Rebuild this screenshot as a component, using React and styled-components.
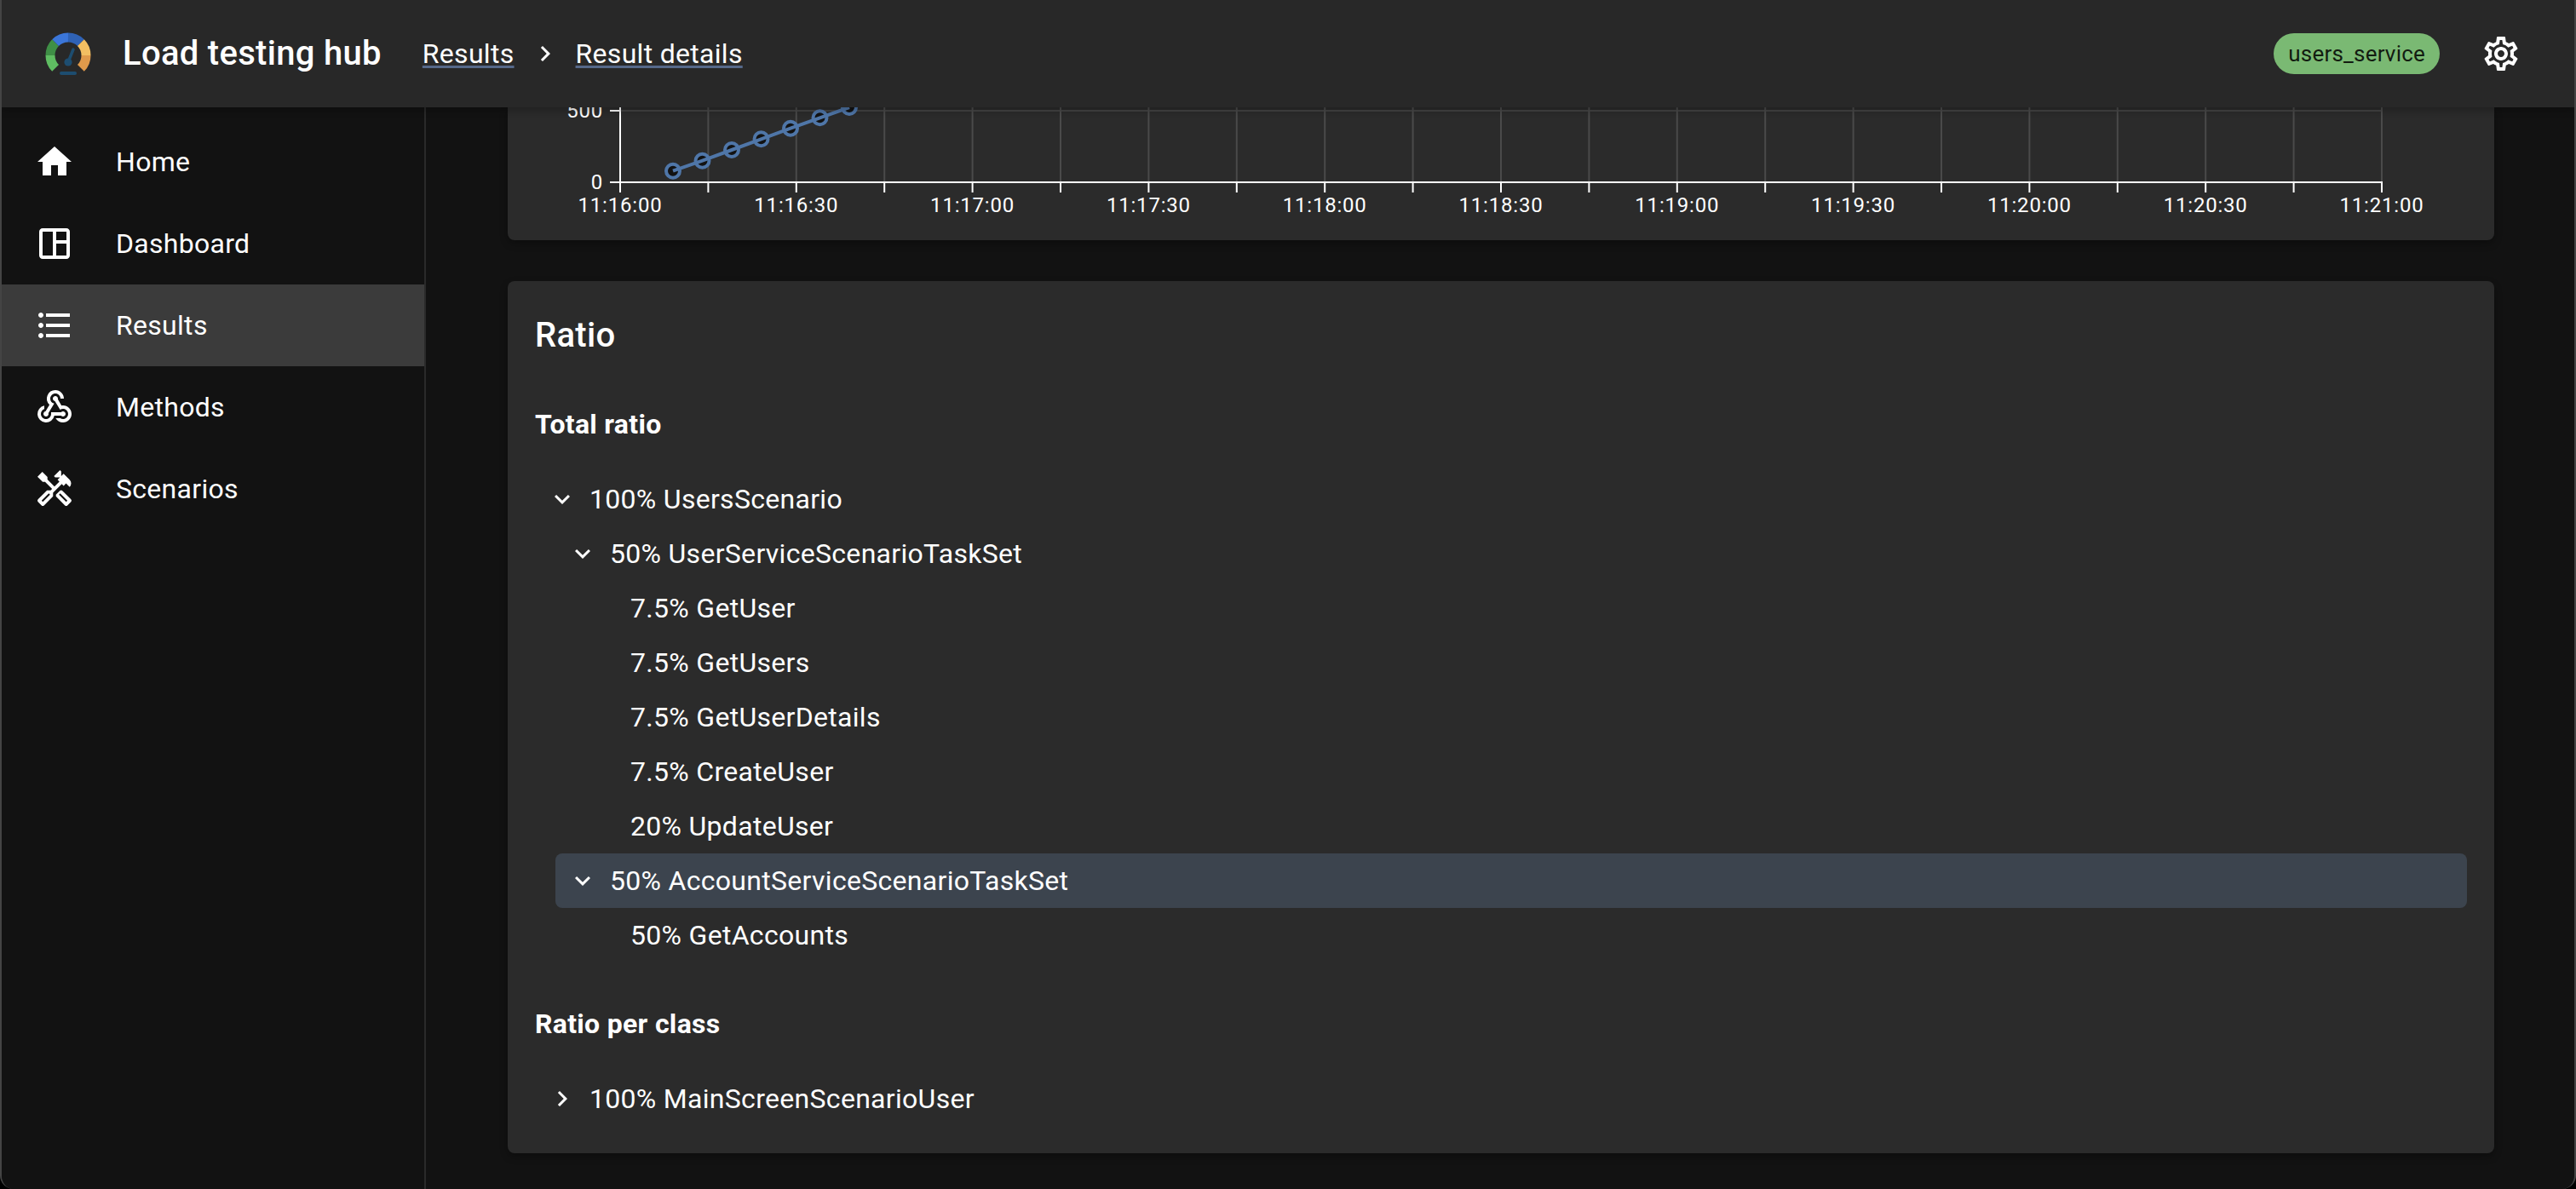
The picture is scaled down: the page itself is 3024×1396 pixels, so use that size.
import React from "react";
import styled, { createGlobalStyle } from "styled-components";
import {
  MdHome,
  MdFormatListBulleted,
  MdOutlineWebhook,
  MdOutlineHandyman,
  MdOutlineSettings,
  MdExpandMore,
  MdChevronRight,
  MdNavigateNext,
} from "react-icons/md";

const GlobalStyle = createGlobalStyle`
  html, body {
    margin: 0;
    padding: 0;
    background: #000;
  }
  * {
    box-sizing: border-box;
  }
`;

const DashboardIcon = ({ size }) => (
  <svg width={size} height={size} viewBox="0 0 24 24" fill="currentColor">
    <path
      fillRule="evenodd"
      d="M19 3H5c-1.1 0-2 .9-2 2v14c0 1.1.9 2 2 2h14c1.1 0 2-.9 2-2V5c0-1.1-.9-2-2-2zM5 19V5h6v14H5zm8 0v-7h6v7h-6zm6-9h-6V5h6v5z"
    />
  </svg>
);

const menu = [
  { label: "Home", Icon: MdHome },
  { label: "Dashboard", Icon: DashboardIcon },
  { label: "Results", Icon: MdFormatListBulleted, active: true },
  { label: "Methods", Icon: MdOutlineWebhook },
  { label: "Scenarios", Icon: MdOutlineHandyman },
];

const totalRatio = [
  { label: "100% UsersScenario", depth: 0, open: true },
  { label: "50% UserServiceScenarioTaskSet", depth: 1, open: true },
  { label: "7.5% GetUser", depth: 2 },
  { label: "7.5% GetUsers", depth: 2 },
  { label: "7.5% GetUserDetails", depth: 2 },
  { label: "7.5% CreateUser", depth: 2 },
  { label: "20% UpdateUser", depth: 2 },
  { label: "50% AccountServiceScenarioTaskSet", depth: 1, open: true, selected: true },
  { label: "50% GetAccounts", depth: 2 },
];

const times = [
  "11:16:00", "11:16:30", "11:17:00", "11:17:30", "11:18:00", "11:18:30",
  "11:19:00", "11:19:30", "11:20:00", "11:20:30", "11:21:00",
];

const points = [
  [790, 200.7], [824.5, 188.7], [859, 176], [893.5, 163.3],
  [928, 150.7], [962.5, 138.3], [997, 126],
];

const AXIS_X = 728;
const TICK_STEP = 103.4;

const Logo = () => (
  <svg width="54" height="54" viewBox="53 36 54 54" fill="none">
    <g strokeWidth="11">
      <path d="M65.1 79.9 A 21 21 0 0 1 59 65" stroke="#5fbd62" />
      <path d="M59 65 A 21 21 0 0 1 65.1 50.1" stroke="#3f8f46" />
      <path d="M65.1 50.1 A 21 21 0 0 1 80 44" stroke="#3b76d9" />
      <path d="M80 44 A 21 21 0 0 1 94.9 50.1" stroke="#2f62b5" />
      <path d="M94.9 50.1 A 21 21 0 0 1 101 65" stroke="#f3bf62" />
      <path d="M101 65 A 21 21 0 0 1 94.9 79.9" stroke="#e09a4b" />
    </g>
    <path d="M80 73 L86 58" stroke="#1d4d70" strokeWidth="3.5" strokeLinecap="round" />
    <circle cx="80" cy="73" r="4.6" fill="#1d4d70" />
    <rect x="70" y="84" width="20" height="4" rx="2" fill="#1d4d70" />
  </svg>
);

const Chart = () => (
  <svg width="2332" height="156" viewBox="596 126 2332 156">
    <line x1={AXIS_X} y1="130" x2="2796" y2="130" stroke="#444" strokeWidth="2" />
    {Array.from({ length: 21 }, (_, i) => (
      <line
        key={i}
        x1={AXIS_X + i * TICK_STEP}
        y1="126"
        x2={AXIS_X + i * TICK_STEP}
        y2="214"
        stroke="#4a4a4a"
        strokeWidth="2"
      />
    ))}
    <line x1={AXIS_X} y1="126" x2={AXIS_X} y2="214" stroke="#fff" strokeWidth="2" />
    <line x1={AXIS_X - 12} y1="130" x2={AXIS_X} y2="130" stroke="#fff" strokeWidth="2" />
    <line x1={AXIS_X - 12} y1="214" x2="2797" y2="214" stroke="#fff" strokeWidth="2" />
    {Array.from({ length: 21 }, (_, i) => (
      <line
        key={i}
        x1={AXIS_X + i * TICK_STEP}
        y1="214"
        x2={AXIS_X + i * TICK_STEP}
        y2="226"
        stroke="#fff"
        strokeWidth="2"
      />
    ))}
    {points.map(([x, y], i) => (
      <circle key={i} cx={x} cy={y} r="8" fill="#121212" stroke="#4f76a8" strokeWidth="4" />
    ))}
    <polyline
      points={points.map((p) => p.join(",")).join(" ")}
      fill="none"
      stroke="#4f76a8"
      strokeWidth="4"
    />
    <TickLabel x={AXIS_X - 20} y="130" textAnchor="end" dominantBaseline="central">500</TickLabel>
    <TickLabel x={AXIS_X - 20} y="214" textAnchor="end" dominantBaseline="central">0</TickLabel>
    {times.map((t, i) => (
      <TickLabel key={t} x={AXIS_X + i * TICK_STEP * 2} y="241" textAnchor="middle" dominantBaseline="central">
        {t}
      </TickLabel>
    ))}
  </svg>
);

const TreeItem = ({ label, depth, open, closed, selected }) => (
  <TreeRow $selected={selected}>
    <TreeIndent $depth={depth}>
      {open && <MdExpandMore size={36} />}
      {closed && <MdChevronRight size={36} />}
    </TreeIndent>
    <TreeLabel>{label}</TreeLabel>
  </TreeRow>
);

const App = () => (
  <Page>
    <GlobalStyle />
    <Header>
      <LogoLink>
        <Logo />
      </LogoLink>
      <AppTitle>Load testing hub</AppTitle>
      <Breadcrumbs>
        <Crumb>Results</Crumb>
        <MdNavigateNext size={36} />
        <Crumb>Result details</Crumb>
      </Breadcrumbs>
      <HeaderRight>
        <ServiceChip>users_service</ServiceChip>
        <SettingsButton>
          <MdOutlineSettings size={48} />
        </SettingsButton>
      </HeaderRight>
    </Header>
    <Body>
      <Sidebar>
        {menu.map(({ label, Icon, active }) => (
          <MenuItem key={label} $active={active}>
            <MenuIcon>
              <Icon size={48} />
            </MenuIcon>
            <MenuLabel>{label}</MenuLabel>
          </MenuItem>
        ))}
      </Sidebar>
      <Main>
        <ChartCard>
          <Chart />
        </ChartCard>
        <RatioCard>
          <CardTitle>Ratio</CardTitle>
          <SectionTitle>Total ratio</SectionTitle>
          <Tree>
            {totalRatio.map((item) => (
              <TreeItem key={item.label} {...item} />
            ))}
          </Tree>
          <SectionTitle>Ratio per class</SectionTitle>
          <Tree>
            <TreeItem label="100% MainScreenScenarioUser" depth={0} closed />
          </Tree>
        </RatioCard>
      </Main>
    </Body>
  </Page>
);

const Page = styled.div`
  width: 3024px;
  height: 1396px;
  display: flex;
  flex-direction: column;
  overflow: hidden;
  background: #121212;
  color: #fff;
  font-family: Roboto, "Liberation Sans", sans-serif;
  border-left: 2px solid #444;
  border-right: 2px solid #444;
  border-bottom-left-radius: 16px;
  border-bottom-right-radius: 16px;
`;

const Header = styled.header`
  position: relative;
  z-index: 2;
  flex: 0 0 126px;
  display: flex;
  align-items: center;
  padding: 0 62px 0 51px;
  background: #282828;
  box-shadow: 0 4px 8px rgba(0, 0, 0, 0.25);
`;

const LogoLink = styled.div`
  display: flex;
  width: 54px;
  height: 54px;
  margin-right: 37px;
`;

const AppTitle = styled.h1`
  margin: 0 48px 0 0;
  font-size: 40px;
  font-weight: 500;
  line-height: 64px;
  letter-spacing: 0.3px;
`;

const Breadcrumbs = styled.nav`
  display: flex;
  align-items: center;
  gap: 18px;
`;

const Crumb = styled.a`
  font-size: 32px;
  line-height: 48px;
  letter-spacing: 0.3px;
  color: #fff;
  text-decoration: underline;
  text-decoration-color: #56698a;
  text-decoration-skip-ink: none;
  text-underline-offset: 3px;
  text-decoration-thickness: 3px;
`;

const HeaderRight = styled.div`
  margin-left: auto;
  display: flex;
  align-items: center;
  gap: 48px;
`;

const ServiceChip = styled.span`
  display: flex;
  align-items: center;
  height: 48px;
  padding: 0 17px;
  border-radius: 24px;
  background: #7ab973;
  color: rgba(0, 0, 0, 0.87);
  font-size: 26px;
  letter-spacing: 0.2px;
`;

const SettingsButton = styled.div`
  display: flex;
  width: 48px;
  height: 48px;
  color: #fff;
`;

const Body = styled.div`
  flex: 1;
  min-height: 0;
  display: flex;
`;

const Sidebar = styled.aside`
  flex: 0 0 498px;
  padding-top: 16px;
  background: #121212;
  border-right: 2px solid #2a2a2a;
`;

const MenuItem = styled.div`
  display: flex;
  align-items: center;
  height: 96px;
  padding-left: 38px;
  background: ${(p) => (p.$active ? "#3b3b3b" : "transparent")};
`;

const MenuIcon = styled.span`
  display: flex;
  flex: 0 0 96px;
  color: #fff;
`;

const MenuLabel = styled.span`
  font-size: 32px;
  line-height: 48px;
  letter-spacing: 0.3px;
`;

const Main = styled.main`
  flex: 1;
  min-width: 0;
  display: flex;
  flex-direction: column;
  justify-content: flex-end;
  gap: 48px;
  padding: 0 94px 42px 96px;
`;

const Card = styled.section`
  border-radius: 8px;
  background: #2b2b2b;
  box-shadow: 0 4px 10px rgba(0, 0, 0, 0.3);
`;

const ChartCard = styled(Card)`
  flex: 0 0 156px;
  border-top-left-radius: 0;
  border-top-right-radius: 0;
  overflow: hidden;

  svg {
    display: block;
  }
`;

const TickLabel = styled.text`
  fill: #fff;
  font-size: 24px;
  letter-spacing: 0.8px;
  font-family: Roboto, "Liberation Sans", sans-serif;
`;

const RatioCard = styled(Card)`
  padding: 32px;
`;

const CardTitle = styled.h2`
  margin: 0 0 48px;
  font-size: 40px;
  font-weight: 500;
  line-height: 64px;
  letter-spacing: 0.3px;
`;

const SectionTitle = styled.h3`
  margin: 0 0 32px;
  font-size: 32px;
  font-weight: 700;
  line-height: 48px;
  letter-spacing: 0.3px;
`;

const Tree = styled.div`
  margin-left: 24px;

  & + h3 {
    margin-top: 48px;
  }
`;

const TreeRow = styled.div`
  display: flex;
  align-items: center;
  height: 64px;
  border-radius: 8px;
  background: ${(p) => (p.$selected ? "#3c444e" : "transparent")};
`;

const TreeIndent = styled.span`
  display: flex;
  align-items: center;
  justify-content: center;
  flex: 0 0 16px;
  min-width: 0;
  margin-left: ${(p) => p.$depth * 24}px;
  margin-right: 24px;
  color: #fff;

  svg {
    flex-shrink: 0;
  }
`;

const TreeLabel = styled.span`
  font-size: 32px;
  line-height: 48px;
  letter-spacing: 0.3px;
`;

export default App;
